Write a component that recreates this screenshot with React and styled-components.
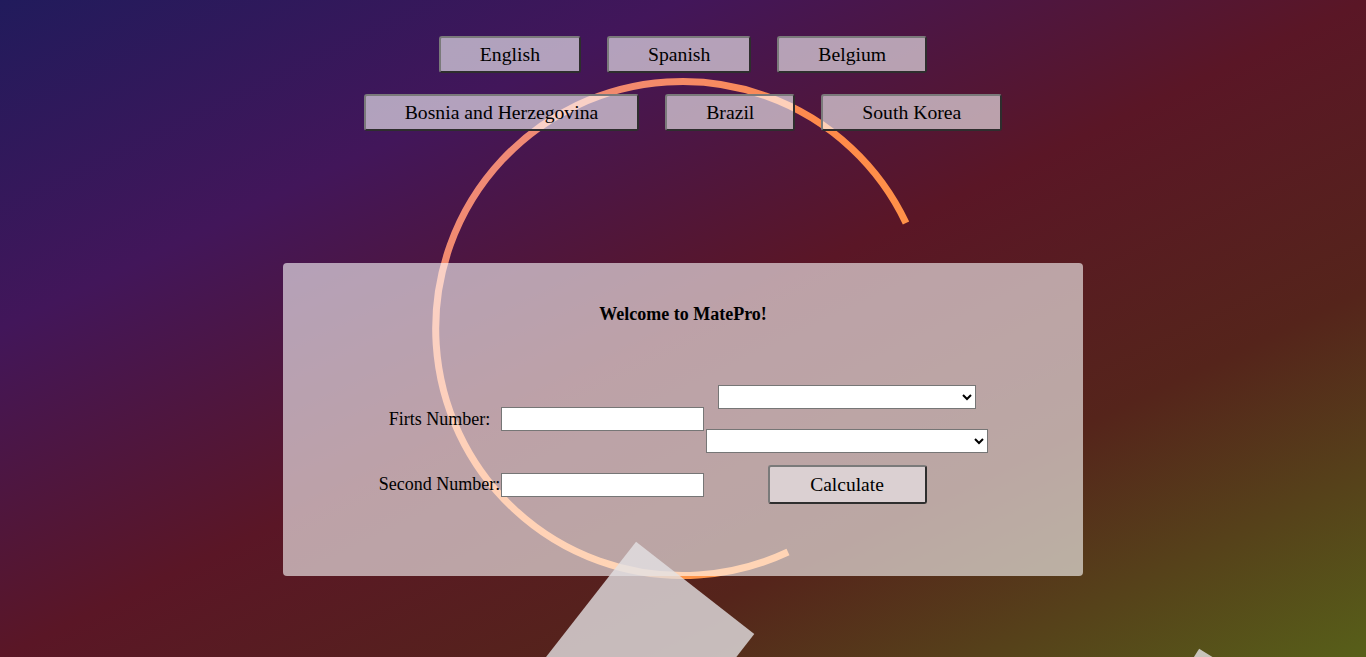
import React from 'react'
import styled, { createGlobalStyle } from 'styled-components'

const GlobalStyle = createGlobalStyle`
  html, body {
    margin: 0;
    padding: 0;
  }
  body {
    font-family: "Liberation Serif", "Times New Roman", serif;
  }
`

const Page = styled.div`
  position: relative;
  min-height: 100vh;
  overflow: hidden;
  box-sizing: border-box;
  padding-top: 36px;
  background: linear-gradient(
    to bottom right,
    #211b5c 0%,
    #42165a 25%,
    #5a1626 50%,
    #55241b 72%,
    #575f19 100%
  );
`

const Deco = styled.svg`
  position: absolute;
  inset: 0;
  width: 100%;
  height: 100%;
  z-index: 0;
  pointer-events: none;
`

const Content = styled.div`
  position: relative;
  z-index: 1;
`

const Nav = styled.nav`
  display: flex;
  flex-direction: column;
  align-items: center;
  gap: 21px;
`

const NavRow = styled.div`
  display: flex;
  justify-content: center;
  gap: 26px;
`

const NavButton = styled.button`
  font-family: "Liberation Serif", "Times New Roman", serif;
  font-size: 19.7px;
  line-height: 23px;
  color: #000;
  padding: 5px 39px 5px;
  background: rgba(255, 255, 255, 0.6);
  border: 2px solid;
  border-color: #7a7a7a #2e2e2e #2e2e2e #7a7a7a;
  border-radius: 3px;
  cursor: pointer;
`

const Card = styled.section`
  width: 800px;
  height: 313px;
  box-sizing: border-box;
  margin: 132px auto 0;
  padding-top: 41px;
  border-radius: 4px;
  background: rgba(255, 255, 255, 0.6);
`

const Title = styled.h4`
  margin: 0;
  text-align: center;
  font-size: 18px;
  line-height: 20px;
  font-weight: bold;
  color: #000;
`

const Form = styled.form`
  display: grid;
  grid-template-columns: 123px 205px 282px;
  grid-template-rows: 68px 39px;
  row-gap: 12px;
  width: 610px;
  margin: 61px auto 0;
  align-items: center;
`

const Label = styled.label`
  font-size: 18px;
  color: #000;
  text-align: center;
`

const NumberInput = styled.input`
  width: 203px;
  height: 24px;
  box-sizing: border-box;
  margin: 0;
  border: 1px solid #767676;
  border-radius: 0;
  background: #fff;
  font-size: 16px;
`

const SelectStack = styled.div`
  display: flex;
  flex-direction: column;
  align-items: center;
  gap: 20px;
`

const Select = styled.select`
  width: ${p => p.$w}px;
  height: 24px;
  box-sizing: border-box;
  margin: 0;
  border: 1px solid #767676;
  border-radius: 0;
  background: #fff;
  font-size: 14px;
`

const CalcCell = styled.div`
  display: flex;
  justify-content: center;
`

const CalcButton = styled.button`
  width: 159px;
  height: 39px;
  font-family: "Liberation Serif", "Times New Roman", serif;
  font-size: 19.5px;
  color: #000;
  background: #dbd0d2;
  border: 2px solid;
  border-color: #7a7a7a #2e2e2e #2e2e2e #7a7a7a;
  border-radius: 3px;
  cursor: pointer;
`

const Square = styled.div`
  position: absolute;
  z-index: 2;
  width: 150px;
  height: 150px;
  left: ${p => p.$cx - 75}px;
  top: ${p => p.$cy - 75}px;
  transform: rotate(${p => p.$rot}deg);
  background: rgba(228, 225, 228, 0.8);
  pointer-events: none;
`

const countries = [
  ['English', 'Spanish', 'Belgium'],
  ['Bosnia and Herzegovina', 'Brazil', 'South Korea'],
]

export default function App() {
  return (
    <>
      <GlobalStyle />
      <Page>
        <Deco>
          <defs>
            <linearGradient id="arcGrad" gradientUnits="userSpaceOnUse" x1="406" y1="73" x2="766" y2="433">
              <stop offset="0" stopColor="#ec8a80" />
              <stop offset="0.25" stopColor="#ef8a76" />
              <stop offset="0.65" stopColor="#ff8a4a" />
              <stop offset="1" stopColor="#ff9448" />
            </linearGradient>
          </defs>
          <path
            d="M 906 223 A 247 247 0 1 0 788 552"
            fill="none"
            stroke="url(#arcGrad)"
            strokeWidth="7"
          />
        </Deco>
        <Content>
          <Nav>
            {countries.map((row, i) => (
              <NavRow key={i}>
                {row.map(c => (
                  <NavButton key={c}>{c}</NavButton>
                ))}
              </NavRow>
            ))}
          </Nav>
          <Card>
            <Title>Welcome to MatePro!</Title>
            <Form onSubmit={e => e.preventDefault()}>
              <Label htmlFor="first">Firts Number:</Label>
              <NumberInput id="first" type="text" />
              <SelectStack>
                <Select $w={258} />
                <Select $w={282} />
              </SelectStack>
              <Label htmlFor="second">Second Number:</Label>
              <NumberInput id="second" type="text" />
              <CalcCell>
                <CalcButton type="button">Calculate</CalcButton>
              </CalcCell>
            </Form>
          </Card>
        </Content>
        <Square $cx={649} $cy={647} $rot={38} />
        <Square $cx={1223} $cy={752} $rot={32} />
      </Page>
    </>
  )
}
